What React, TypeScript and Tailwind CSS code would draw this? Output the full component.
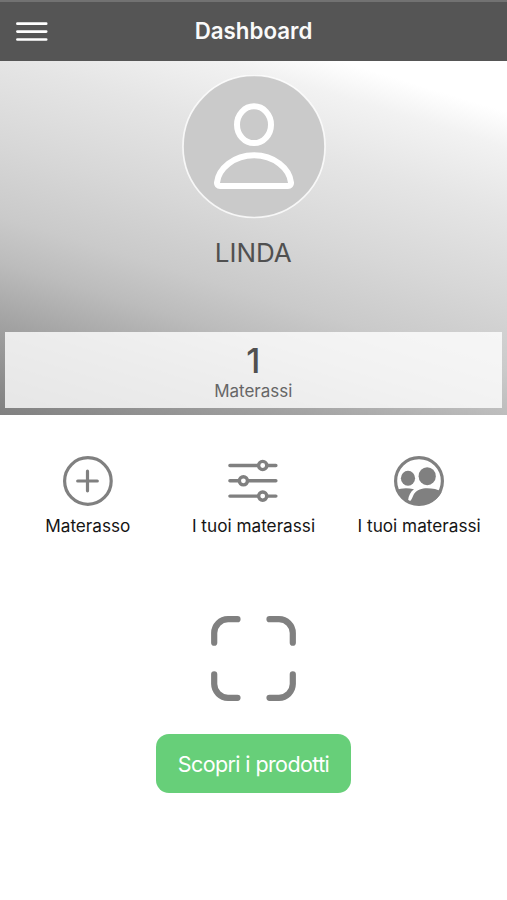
import React from 'react';

interface ActionItem {
  label: string;
  icon: React.ReactNode;
}

const PlusIcon: React.FC = () => (
  <svg width="50" height="50" viewBox="0 0 50 50" fill="none" stroke="#808080" strokeLinecap="round">
    <circle cx="24.9" cy="25" r="23.3" strokeWidth="3.2" />
    <path d="M24.5 15.2v19.6M14.7 25h19.6" strokeWidth="3.2" />
  </svg>
);

const SlidersIcon: React.FC = () => (
  <svg width="50" height="50" viewBox="0 0 50 50" fill="none" stroke="#808080" strokeWidth="3.4" strokeLinecap="round">
    <path d="M1.9 9.5h27.8M39.3 9.5h8.6" />
    <path d="M1.9 24.8h8.4M19.9 24.8h28" />
    <path d="M1.9 40.1h27.8M39.3 40.1h8.6" />
    <circle cx="34.7" cy="9.5" r="4.1" />
    <circle cx="15.4" cy="24.8" r="4.1" />
    <circle cx="34.7" cy="40.1" r="4.1" />
  </svg>
);

const PeopleIcon: React.FC = () => (
  <svg width="50" height="50" viewBox="0 0 50 50" fill="#808080">
    <circle cx="25" cy="25" r="23.4" fill="none" stroke="#808080" strokeWidth="3.2" />
    <ellipse cx="14" cy="22.2" rx="7.1" ry="7.5" />
    <ellipse cx="33.2" cy="20.2" rx="8.6" ry="9" />
    <path d="M2.5 34C7 32 13 31.4 20 33.2c-3.4 2.6-5.4 6-6 11.5C8.5 42.5 5 39 2.5 34Z" />
    <path d="M14.5 46.5C18.5 43.5 18.5 40.5 20 38c3-4.2 8-5.8 13-5.8 5.5 0 11 1.1 14.7 3.7C43.5 44 35 49 25 49c-4 0-7.5-1-10.5-2.5Z" />
  </svg>
);

const ScanIcon: React.FC = () => (
  <svg
    width="86"
    height="86"
    viewBox="0 0 86 86"
    fill="none"
    stroke="#808080"
    strokeWidth="6.2"
    strokeLinecap="round"
    strokeLinejoin="round"
  >
    <path d="M3.2 27.7V18A14 14 0 0 1 17 4.2h9.5" />
    <path d="M58.5 4.2H68A14 14 0 0 1 81.8 18v9.7" />
    <path d="M81.8 59.3V69A14 14 0 0 1 68 82.8h-9.5" />
    <path d="M26.5 82.8H17A14 14 0 0 1 3.2 69v-9.7" />
  </svg>
);

const Avatar: React.FC = () => (
  <svg className="ml-px" width="144" height="144" viewBox="0 0 144 144" fill="none" stroke="white">
    <circle cx="72" cy="71.5" r="71" fill="#cacaca" strokeOpacity="0.8" strokeWidth="1.7" />
    <g strokeWidth="6" strokeLinejoin="round">
      <ellipse cx="72" cy="49.7" rx="17" ry="18.4" />
      <path d="M38 111c-2 0-3.2-1.3-3-3.4C36.500 93.500 52 80.300 72 80.300s35.500 13.200 37 27.300c.2 2.100-1 3.400-3 3.400Z" />
    </g>
  </svg>
);

const actions: ActionItem[] = [
  { label: 'Materasso', icon: <PlusIcon /> },
  { label: 'I tuoi materassi', icon: <SlidersIcon /> },
  { label: 'I tuoi materassi', icon: <PeopleIcon /> },
];

const Header: React.FC = () => (
  <header className="grid h-[61px] grid-cols-[64px_1fr_64px] items-center border-t-2 border-[#727272] bg-[#555555]">
    <button className="flex pl-4" aria-label="Menu">
      <svg width="32" height="20" viewBox="0 0 32 20" stroke="white" strokeWidth="2.7" strokeLinecap="round">
        <path d="M1.4 1.7h28.8M1.4 9.6h28.8M1.4 17.5h28.8" />
      </svg>
    </button>
    <h1 className="pb-0.5 text-center text-[22.3px] leading-7 font-semibold text-[#fafafa]">Dashboard</h1>
  </header>
);

const Profile: React.FC = () => (
  <section className="flex h-[354px] flex-col items-center bg-[linear-gradient(197deg,#ffffff_0%,#ffffff_10%,#f2f2f2_17%,#e5e5e5_30%,#d7d7d7_47%,#cacaca_61%,#bcbcbc_70%,#a2a2a2_82%,#808080_100%)] pt-[14px] pr-[5.5px] pb-[7px] pl-[5px]">
    <Avatar />
    <h2 className="mt-[18px] text-[26px] leading-8 text-[#505050]">LINDA</h2>
    <div className="mt-auto flex h-[76px] w-full flex-col items-center bg-white/80 pt-[9px]">
      <span className="text-[34px] leading-10 font-medium text-[#505050]">1</span>
      <span className="text-[17px] leading-[21px] text-[#666666]">Materassi</span>
    </div>
  </section>
);

export default function App() {
  return (
    <div className="flex min-h-[900px] flex-col bg-white font-['Inter',sans-serif]">
      <Header />
      <Profile />
      <nav className="grid grid-cols-3 px-[5px] pt-[41px]">
        {actions.map((action, index) => (
          <button key={index} className="flex flex-col items-center gap-2">
            {action.icon}
            <span className="text-[17.2px] leading-6 whitespace-nowrap text-[#151515]">{action.label}</span>
          </button>
        ))}
      </nav>
      <main className="flex flex-col items-center pt-[77px]">
        <ScanIcon />
        <button className="mt-[33px] h-[59px] w-[195px] rounded-[13px] bg-[#67cf79] pt-0.5 text-[21.5px] tracking-[-0.6px] whitespace-nowrap text-white">
          Scopri i prodotti
        </button>
      </main>
    </div>
  );
}
